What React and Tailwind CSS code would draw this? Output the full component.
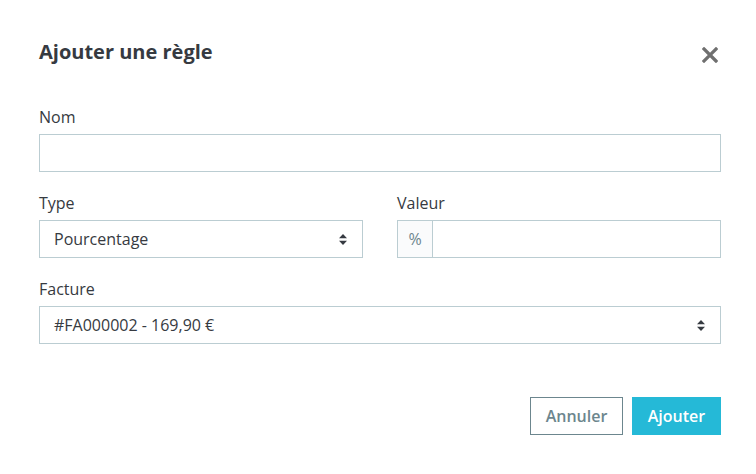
function SortIcon() {
  return (
    <svg width="8" height="11" viewBox="0 0 8 11" className="shrink-0">
      <path d="M4 0 L8 4.3 H0 Z" fill="#363a41" />
      <path d="M4 11 L8 6.7 H0 Z" fill="#363a41" />
    </svg>
  );
}

function Label({ children }) {
  return <label className="block text-[16px] leading-6 text-[#363a41] mb-[5px]">{children}</label>;
}

function SelectBox({ value }) {
  return (
    <div className="h-[38px] border border-[#bbcdd2] bg-white flex items-center justify-between pl-[14px] pr-[15px]">
      <span className="text-[16px] text-[#363a41]">{value}</span>
      <SortIcon />
    </div>
  );
}

export default function App() {
  return (
    <div className="w-[756px] h-[474px] bg-white font-['Open_Sans',sans-serif]">
      <div className="flex items-start justify-between pl-[39px] pr-[38px] pt-[38px]">
        <h3 className="text-[20px] leading-7 font-bold text-[#363a41]">Ajouter une règle</h3>
        <button className="mt-[9px] text-[#6f6f6f]">
          <svg width="16" height="16" viewBox="0 0 16 16">
            <path d="M2 2 L14 14 M14 2 L2 14" stroke="currentColor" strokeWidth="3.2" strokeLinecap="square" />
          </svg>
        </button>
      </div>

      <div className="pl-[39px] pr-[35px] pt-[39px]">
        <div>
          <Label>Nom</Label>
          <div className="h-[38px] border border-[#bbcdd2] bg-white" />
        </div>

        <div className="grid grid-cols-2 gap-x-[34px] mt-[19px]">
          <div>
            <Label>Type</Label>
            <SelectBox value="Pourcentage" />
          </div>
          <div>
            <Label>Valeur</Label>
            <div className="h-[38px] border border-[#bbcdd2] bg-white flex">
              <div className="w-[35px] bg-[#fafbfc] border-r border-[#bbcdd2] flex items-center justify-center text-[16px] text-[#6c868e]">
                %
              </div>
              <div className="flex-1" />
            </div>
          </div>
        </div>

        <div className="mt-[19px]">
          <Label>Facture</Label>
          <SelectBox value="#FA000002 - 169,90 €" />
        </div>

        <div className="flex justify-end gap-[9px] mt-[53px]">
          <button className="w-[93px] h-[38px] border border-[#6c868e] text-[#6c868e] text-[16px] font-semibold bg-white">
            Annuler
          </button>
          <button className="w-[89px] h-[38px] bg-[#25b9d7] text-white text-[16px] font-semibold">
            Ajouter
          </button>
        </div>
      </div>
    </div>
  );
}
